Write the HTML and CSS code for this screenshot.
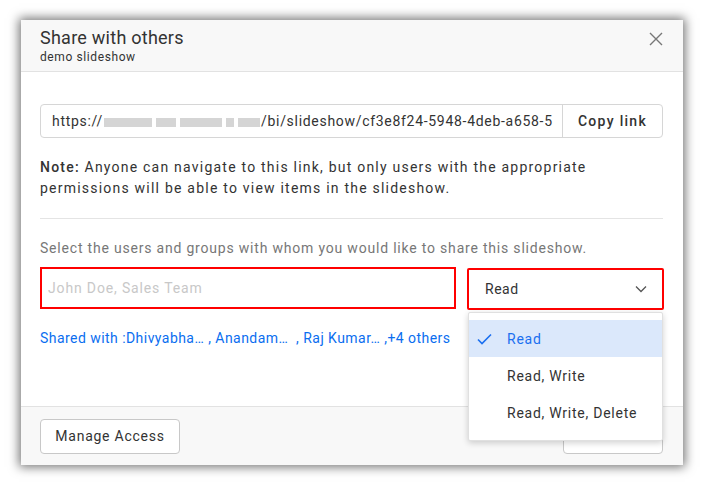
FILE: index.html
```html
<!DOCTYPE html>
<html>
<head>
<meta charset="utf-8">
<link rel="stylesheet" href="styles.css">
</head>
<body>
<div class="dialog">
  <div class="header">
    <div class="titles">
      <div class="title">Share with others</div>
      <div class="subtitle">demo slideshow</div>
    </div>
    <svg class="close" width="14" height="14" viewBox="0 0 14 14"><path d="M1 1L13 13M13 1L1 13" stroke="#777" stroke-width="1.4" fill="none"/></svg>
  </div>
  <div class="body">
    <div class="urlrow">
      <div class="url">https://<span class="blur"><i class="b1"></i><i class="b2"></i><i class="b3"></i><i class="b4"></i><i class="b5"></i></span>/bi/slideshow/cf3e8f24-5948-4deb-a658-5</div>
      <div class="copy">Copy link</div>
    </div>
    <p class="note"><b>Note:</b> Anyone can navigate to this link, but only users with the appropriate permissions will be able to view items in the slideshow.</p>
    <div class="divider"></div>
    <p class="hint">Select the users and groups with whom you would like to share this slideshow.</p>
    <div class="pickrow">
      <div class="people">John Doe, Sales Team</div>
      <div class="selectwrap">
        <div class="select"><span>Read</span>
          <svg width="12" height="8" viewBox="0 0 12 8"><path d="M1 1.5L6 6.5L11 1.5" stroke="#555" stroke-width="1.3" fill="none"/></svg>
        </div>
        <div class="menu">
          <div class="item active"><svg class="check" width="15" height="12" viewBox="0 0 15 12"><path d="M1 6.5L5 10.5L14 1.5" stroke="#1a6ff0" stroke-width="1.6" fill="none"/></svg><span>Read</span></div>
          <div class="item"><span>Read, Write</span></div>
          <div class="item"><span>Read, Write, Delete</span></div>
        </div>
      </div>
    </div>
    <div class="shared">Shared with :Dhivyabha… , Anandam…&nbsp; , Raj Kumar… ,+4 others</div>
  </div>
  <div class="footer">
    <div class="btn">Manage Access</div>
    <div class="btn right"></div>
  </div>
</div>
</body>
</html>
```
FILE: styles.css
```css
html, body { margin: 0; padding: 0; }
body {
  width: 705px; height: 485px;
  background: #fff;
  font-family: Roboto, "Liberation Sans", sans-serif;
  display: flex; align-items: flex-start; justify-content: flex-start;
  overflow: hidden;
}
.dialog {
  margin: 20px 0 0 21px;
  width: 662px; height: 445px;
  background: #fff;
  box-shadow: 0 0 10px 2px rgba(0,0,0,0.55);
  display: flex; flex-direction: column;
}
.header {
  height: 52px; box-sizing: border-box;
  background: #f8f8f8;
  border-bottom: 1px solid #e2e2e2;
  display: flex; justify-content: space-between;
  padding: 7px 20px 0 19px;
}
.title { font-size: 18px; color: #333; line-height: 21px; letter-spacing: 0.25px; }
.subtitle { font-size: 12px; color: #333; line-height: 14px; margin-top: 2px; letter-spacing: 0.6px; }
.close { margin-top: 5px; }
.body {
  flex: 1; position: relative;
  padding: 32px 20px 0 19px;
}
.urlrow {
  display: flex; height: 34px; box-sizing: border-box;
  border: 1px solid #d6d6d6; border-radius: 4px;
}
.url {
  flex: 1; overflow: hidden; white-space: nowrap;
  font-size: 14px; color: #333; line-height: 32px;
  padding-left: 11px; letter-spacing: 0.7px;
}
.blur { display: inline-flex; gap: 4px; vertical-align: middle; margin: 0 1px; }
.blur i { display: inline-block; height: 9px; background: #d5d5d5; }
.b1 { width: 48px; } .b2 { width: 20px; } .b3 { width: 42px; } .b4 { width: 8px; } .b5 { width: 22px; }
.copy {
  width: 99px; border-left: 1px solid #d6d6d6;
  font-size: 14px; font-weight: 500; color: #333;
  text-align: center; line-height: 32px; letter-spacing: 1.3px;
}
.note {
  margin: 19px 0 0; font-size: 14px; line-height: 21px; color: #333;
  letter-spacing: 1.22px;
}
.note b { font-weight: 500; }
.divider { height: 1px; background: #e4e4e4; margin-top: 19px; }
.hint {
  margin: 20px 0 0; font-size: 14px; line-height: 18px; color: #777;
  letter-spacing: 0.8px;
}
.pickrow { display: flex; gap: 11px; margin-top: 10px; }
.people {
  width: 416px; height: 42px; box-sizing: border-box; flex: none;
  border: 2px solid #f00;
  font-size: 14px; color: #c8c8c8; line-height: 38px; padding-left: 6px;
  letter-spacing: 0.85px;
}
.selectwrap { position: relative; width: 197px; flex: none; margin-top: 1px; }
.select {
  height: 42px; box-sizing: border-box;
  border: 2px solid #f00; border-radius: 2px;
  display: flex; align-items: center; justify-content: space-between;
  padding: 0 15px 0 16px;
  font-size: 14px; color: #333; letter-spacing: 0.5px;
}
.menu {
  position: absolute; left: 1px; top: 44px; width: 193px;
  background: #fff; border: 1px solid #e0e0e0; border-radius: 2px;
  box-shadow: 0 2px 6px rgba(0,0,0,0.18);
  padding: 7px 0 9px; z-index: 5;
}
.item {
  height: 37px; display: flex; align-items: center;
  padding-left: 38px; position: relative;
  font-size: 14px; color: #333; letter-spacing: 0.75px;
}
.item.active { background: #dbe8fb; color: #1a6ff0; }
.check { position: absolute; left: 8px; top: 13px; }
.shared {
  margin-top: 19px; font-size: 14px; color: #0a6ef0; line-height: 18px;
  letter-spacing: 0.45px;
}
.footer {
  height: 59px; box-sizing: border-box;
  background: #f8f8f8; border-top: 1px solid #e2e2e2;
  display: flex; justify-content: space-between; align-items: flex-start;
  padding: 12px 20px 0 19px;
}
.btn {
  width: 140px; height: 35px; box-sizing: border-box;
  border: 1px solid #c8c8c8; border-radius: 4px; background: #fff;
  font-size: 14px; font-weight: 400; color: #333; line-height: 33px;
  text-align: center; letter-spacing: 0.75px;
}
.btn.right { width: 100px; margin-top: 2px; height: 33px; }
```
